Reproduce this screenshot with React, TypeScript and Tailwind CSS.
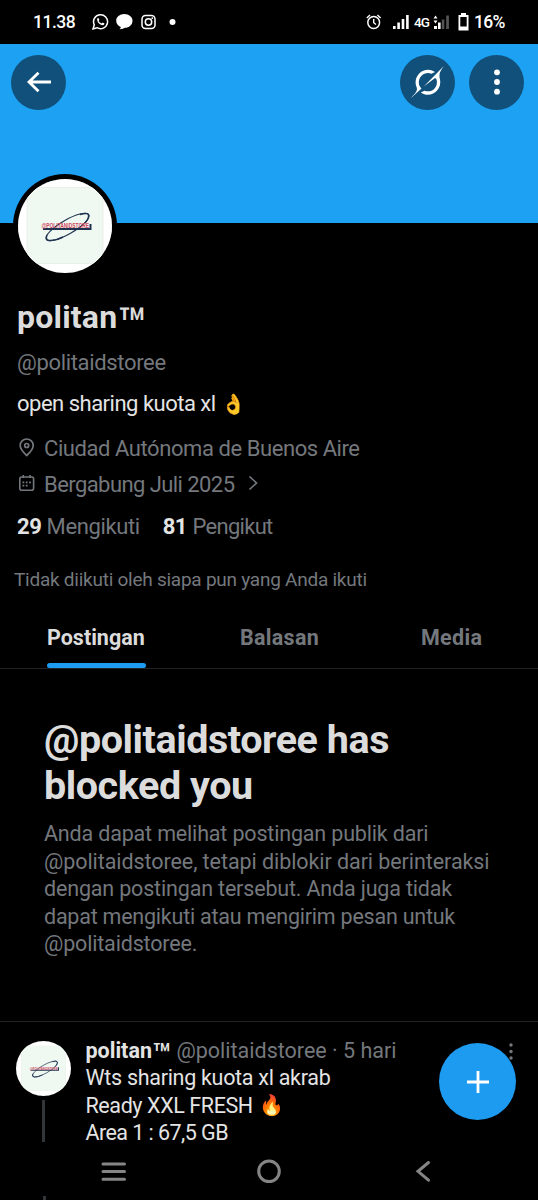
import React from 'react';

const FONT = "font-['Roboto','Liberation_Sans',sans-serif]";

function StoreLogo({ className }: { className: string }) {
  return (
    <svg viewBox="0 0 94 94" className={`${className} shrink-0 rounded-full`}>
      <circle cx="47" cy="47" r="47" fill="#ffffff" />
      <rect x="9" y="8.500" width="76" height="76" fill="#eff9f1" stroke="#e6ebe6" strokeWidth="0.800" />
      {/* white ring over the corners of the square */}
      <circle cx="47" cy="47" r="51" fill="none" stroke="#ffffff" strokeWidth="9" />
      <g fill="none" stroke="#1f3350">
        <ellipse cx="49.500" cy="48" rx="24.500" ry="7" strokeWidth="1.100" transform="rotate(-30 49.500 48)" />
        <path d="M62 35.500Q72 32.500 70.500 38Q70 41 67 44M29 56Q27 61 31 61.500Q38 62 45 58" strokeWidth="1.500" />
      </g>
      <path d="M25 50H72.500V45" stroke="#1f3350" strokeWidth="2" fill="none" />
      <text x="23.500" y="48.800" fontSize="6.600" fontWeight="700" textLength="47.500" lengthAdjust="spacingAndGlyphs" fill="#cf4560" fontFamily="Liberation Sans, sans-serif">
        @POLITANIDSTORE
      </text>
    </svg>
  );
}

function StatusBar() {
  return (
    <div className="flex h-11 items-center bg-black text-white">
      <span className="ml-[33px] mt-0.5 w-[59px] text-[17.500px] font-medium leading-none tracking-[-0.500px]">11.38</span>
      <svg width="90" height="24" viewBox="0 0 90 24" fill="none" stroke="#fff">
        <path d="M1 19L2.300 14.800A7 7 0 1 1 5 17.700Z" strokeWidth="1.500" />
        <path d="M5.200 8.600C5.800 7.700 6.600 7.900 6.900 8.700L7.300 9.800Q7.100 10.500 6.600 11Q7.700 12.800 9.600 13.500L10.600 12.500L12.500 13.400Q12.300 15 10.800 15.200C7.500 15 4.600 11.800 5.200 8.600Z" fill="#fff" stroke="none" />
        <path d="M32.300 4C37 4 40.500 7 40.500 10.700C40.500 15 37 17.700 33 17.700Q31.500 19 27.500 19.300Q29 18 28.800 17C26 15.800 24.200 13.500 24.200 10.700C24.200 7 27.700 4 32.300 4Z" fill="#fff" stroke="none" />
        <rect x="50" y="5.500" width="13" height="13" rx="3.500" strokeWidth="1.500" />
        <circle cx="56.500" cy="12" r="3.200" strokeWidth="1.500" />
        <circle cx="60.300" cy="8.200" r="0.900" fill="#fff" stroke="none" />
        <circle cx="80.500" cy="12" r="3" fill="#fff" stroke="none" />
      </svg>
      <svg width="48" height="24" viewBox="0 0 48 24" className="ml-[183px]" fill="none" stroke="#fff">
        <circle cx="8.700" cy="12.500" r="5.900" strokeWidth="1.500" />
        <path d="M8.700 9V12.700L11 14.500M1.800 8L5 5M15.600 8L12.400 5" strokeWidth="1.400" />
        <path d="M29.300 16V19M33.600 12.500V19M38 9V19M42.400 5V19" strokeWidth="2.600" />
      </svg>
      <span className="ml-px mt-0.5 w-[17px] text-[13.500px] font-medium leading-none tracking-[-1px]">4G</span>
      <svg width="40" height="28" viewBox="0 0 40 28" fill="#fff">
        <path d="M2.500 10.500L4.500 7.500L6.500 10.500ZM2.500 12.500L4.500 15.500L6.500 12.500ZM3 18H6V21H3ZM7 14.500H9.600V21H7Z" />
        <path d="M10.800 11.500H13.300V21H10.800ZM15.200 7.500H17.900V21H15.200Z" fill="#555" />
        <path fillRule="evenodd" d="M30 5H35V7H37.500V22.500H27.500V7H30ZM29.300 9V18.500H35.700V9Z" />
      </svg>
      <span className="ml-[3px] mt-0.5 text-[17.500px] font-medium leading-none tracking-[-0.700px]">16%</span>
    </div>
  );
}

const roundButton = 'flex size-[55px] items-center justify-center rounded-full bg-[#10507a]';

function Banner() {
  return (
    <div className="flex h-[179px] items-start bg-[#1da1f2] px-[11px] pt-[10.500px]">
      <button className={roundButton} aria-label="Kembali">
        <svg width="28" height="28" viewBox="0 0 28 28" fill="none" stroke="#fff" strokeWidth="2.800">
          <path d="M26 14H4M13.500 4.700L4 14L13.500 23.300" />
        </svg>
      </button>
      <button className={`${roundButton} ml-auto`} aria-label="Grok">
        <svg width="33" height="32" viewBox="0 0 33 32" fill="#fff">
          <path d="M12.745 20.540l10.970-8.190c.539-.4 1.307-.244 1.564.38 1.349 3.288.746 7.241-1.938 9.955-2.683 2.714-6.417 3.310-9.830 1.954l-3.728 1.745c5.347 3.697 11.840 2.782 15.898-1.324 3.219-3.255 4.216-7.692 3.284-11.693l.008.009c-1.351-5.878.332-8.227 3.782-13.031L33 0l-4.540 4.590v-.014L12.743 20.544" />
          <path d="M10.480 22.531c-3.837-3.707-3.175-9.446.1-12.755 2.420-2.449 6.388-3.448 9.852-1.979l3.720-1.737c-.67-.49-1.530-1.017-2.515-1.387-4.455-1.854-9.789-.931-13.410 2.728-3.483 3.523-4.579 8.940-2.697 13.561 1.405 3.454-.899 5.898-3.220 8.364C1.490 30.200.666 31.074 0 32l10.478-9.466" />
        </svg>
      </button>
      <button className={`${roundButton} ml-3.5 mr-[3px]`} aria-label="Menu">
        <svg width="28" height="28" viewBox="0 0 28 28" fill="#fff">
          <circle cx="14" cy="4.300" r="2.900" />
          <circle cx="14" cy="14" r="2.900" />
          <circle cx="14" cy="23.700" r="2.900" />
        </svg>
      </button>
    </div>
  );
}

function Profile() {
  return (
    <section className="text-[22px] text-[#74787d]">
      <div className="relative -mt-[49px] ml-[12.500px] size-[104px] rounded-full bg-black p-[5px]">
        <StoreLogo className="size-[94px]" />
      </div>
      <div className="ml-[17px]">
        <h1 className="mt-[19px] flex h-10 text-[32px] font-bold leading-10 tracking-[0.200px] text-[#dcdcdc]">
          politan<span className="mt-2 text-[47px] font-medium">™</span>
        </h1>
        <p className="mt-[10px] h-8 leading-8 tracking-[-0.330px]">@politaidstoree</p>
        <p className="mt-[9px] flex h-8 items-center leading-8 text-[#e4e4e4]">
          <span className="tracking-[-0.500px]">open sharing kuota xl</span>
          <span className="ml-[5px] text-[20px]">👌</span>
        </p>
        <div className="mt-3 flex h-8 items-center">
          <svg width="20" height="22" viewBox="0 0 20 22" fill="none" stroke="#74787d" strokeWidth="1.700">
            <path d="M9.700 18.500C6.500 15.500 3.200 12.500 3.200 8.500A6.500 6.500 0 0 1 16.200 8.500C16.200 12.500 13 15.500 9.700 18.500Z" />
            <circle cx="9.700" cy="8.500" r="2" />
          </svg>
          <span className="ml-[7px] tracking-[-0.430px]">Ciudad Autónoma de Buenos Aire</span>
        </div>
        <div className="mt-1 flex h-8 items-center">
          <svg width="20" height="22" viewBox="0 0 20 22" fill="none" stroke="#74787d" strokeWidth="1.600">
            <rect x="2.800" y="4" width="13.800" height="13.200" rx="2" />
            <path d="M6.300 2V5M13 2V5" />
            <path d="M5.500 12.700H7.300M8.800 12.700H10.600M8.800 9.300H10.600M12.100 9.300H13.900M5.500 9.300H7.300" strokeWidth="1.800" />
          </svg>
          <span className="ml-[7px] tracking-[-0.570px]">Bergabung Juli 2025</span>
          <svg width="12" height="18" viewBox="0 0 12 18" className="-mt-0.5 ml-3.5" fill="none" stroke="#74787d" strokeWidth="1.700">
            <path d="M1.500 2.500L8.500 9L1.500 15.500" />
          </svg>
        </div>
        <div className="mt-[10px] flex h-8 items-center gap-[23px] tracking-[-0.370px]">
          <span><b className="text-[#e4e4e4]">29</b> Mengikuti</span>
          <span className="tracking-[-0.700px]"><b className="mr-px text-[#e4e4e4]">81</b> Pengikut</span>
        </div>
      </div>
      <p className="ml-3.5 mt-[22px] h-8 text-[19px] leading-8 tracking-[-0.250px]">Tidak diikuti oleh siapa pun yang Anda ikuti</p>
    </section>
  );
}

function Tabs() {
  return (
    <nav className="mt-5 flex h-[53px] border-b border-[#202225] pl-[47px] text-[21.500px] font-bold text-[#74787d]">
      <div className="flex w-[99px] flex-col">
        <span className="mt-1.5 h-8 leading-8 text-[#dcdcdc]">Postingan</span>
        <span className="mt-[9px] h-[5px] rounded-full bg-[#1d9bf0]" />
      </div>
      <span className="ml-[94px] mt-1.5 w-20 leading-8 tracking-[0.300px]">Balasan</span>
      <span className="ml-[101px] mt-1.5 leading-8 tracking-[0.300px]">Media</span>
    </nav>
  );
}

function BlockedNotice() {
  return (
    <section className="h-[353px] border-b border-[#202225] pl-11 pt-12">
      <h2 className="text-[39.500px] font-bold leading-[46px] tracking-[-0.450px] text-[#dcdcdc]">
        @politaidstoree has<br />blocked you
      </h2>
      <p className="mt-[11px] whitespace-nowrap text-[21.500px] leading-[27.500px] tracking-[-0.170px] text-[#74787d]">
        Anda dapat melihat postingan publik dari<br />
        <span className="tracking-[-0.070px]">@politaidstoree, tetapi diblokir dari berinteraksi</span><br />
        dengan postingan tersebut. Anda juga tidak<br />
        <span className="tracking-[-0.230px]">dapat mengikuti atau mengirim pesan untuk</span><br />
        @politaidstoree.
      </p>
    </section>
  );
}

function Post() {
  return (
    <article className="flex h-[120px] pl-4 text-[21.500px] leading-[27.500px] text-[#e4e4e4]">
      <div className="flex w-[55px] flex-col items-center pt-[19px]">
        <StoreLogo className="size-[55px]" />
        <span className="mt-1 h-[42px] w-[3px] bg-[#333639]" />
      </div>
      <div className="ml-[14.500px] whitespace-nowrap pt-[14.500px] tracking-[-0.290px]">
        <p className="flex h-[27.500px] tracking-normal">
          <b>politan</b>
          <b className="mr-[5px] mt-0.5 text-[31px] font-medium leading-[31px] h-[25px]">™</b>
          <span className="text-[#74787d]">@politaidstoree · 5 hari</span>
        </p>
        <p>Wts sharing kuota xl akrab</p>
        <p className="flex h-[27.500px] tracking-[-0.400px]">
          Ready XXL FRESH<span className="ml-1.5 text-[20px]">🔥</span>
        </p>
        <p className="tracking-[-0.550px]">Area 1 : 67,5 GB</p>
      </div>
      <svg width="6" height="20" viewBox="0 0 6 20" className="ml-auto mr-6 mt-[20px] shrink-0" fill="#74787d">
        <circle cx="3" cy="3" r="1.700" />
        <circle cx="3" cy="9.500" r="1.700" />
        <circle cx="3" cy="16" r="1.700" />
      </svg>
    </article>
  );
}

function ComposeButton() {
  return (
    <button className="absolute left-[439px] top-[1043px] flex size-[77px] items-center justify-center rounded-full bg-[#1d9bf0]" aria-label="Posting">
      <svg width="24" height="24" viewBox="0 0 24 24" stroke="#fff" strokeWidth="2.800">
        <path d="M12 1V23M1 12H23" />
      </svg>
    </button>
  );
}

function NavigationBar() {
  return (
    <div className="flex h-[58px] flex-col justify-between">
      <svg width="538" height="54" viewBox="0 0 538 54" fill="none" stroke="#858585" strokeWidth="3" strokeLinecap="round">
        <path d="M103 22H124.500M103 29.500H124.500M103 37.300H124.500" />
        <circle cx="269" cy="29.300" r="10.300" />
        <path d="M428.500 20.500L418 29.300L428.500 38.200" />
      </svg>
      <span className="ml-[42.500px] h-1 w-[3px] bg-[#333639]" />
    </div>
  );
}

export default function App() {
  return (
    <main className={`relative h-[1200px] w-[538px] overflow-hidden bg-black ${FONT}`}>
      <StatusBar />
      <Banner />
      <Profile />
      <Tabs />
      <BlockedNotice />
      <Post />
      <NavigationBar />
      <ComposeButton />
    </main>
  );
}
